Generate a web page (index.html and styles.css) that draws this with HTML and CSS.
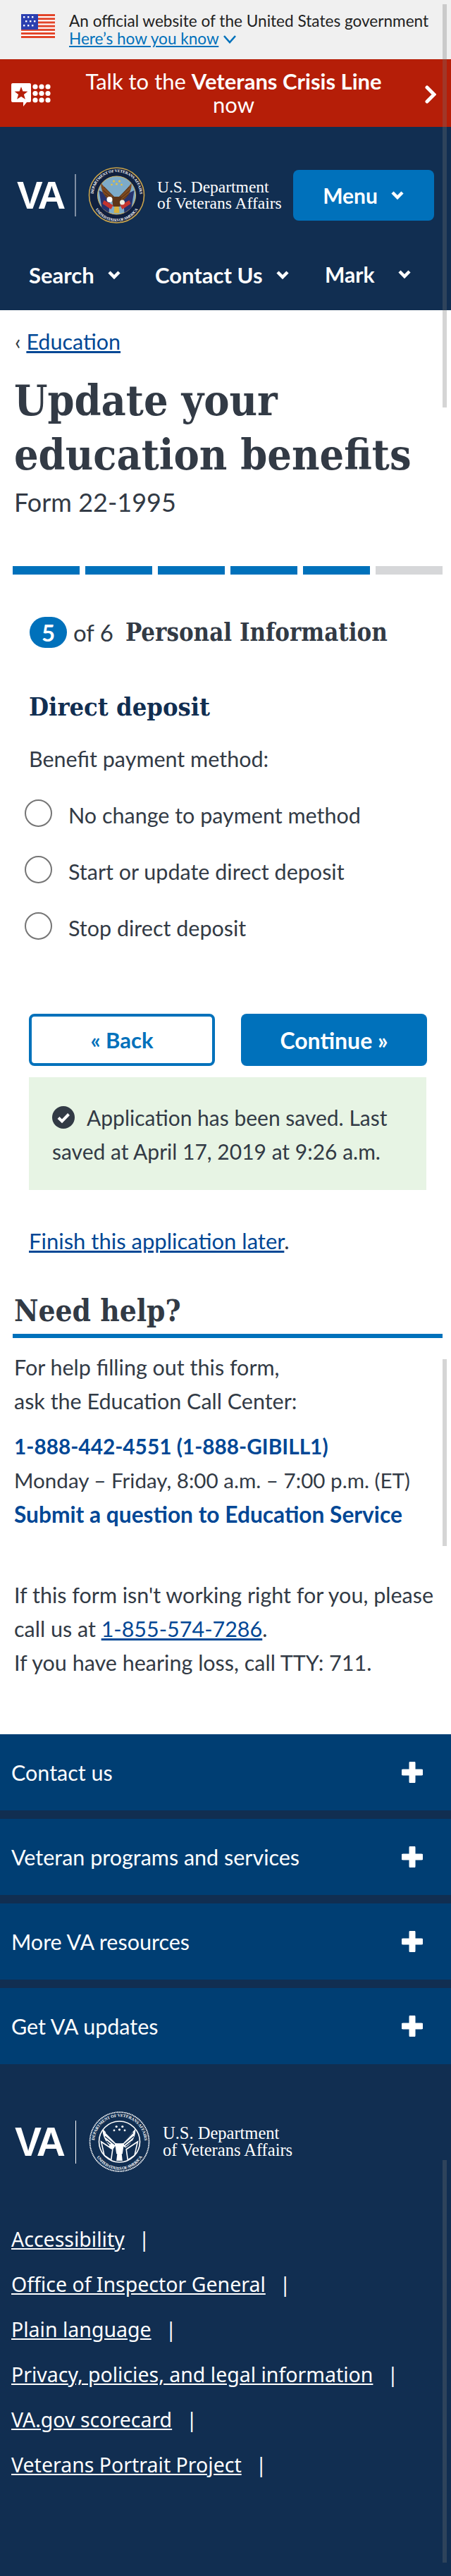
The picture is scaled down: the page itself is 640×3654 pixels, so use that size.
FILE: index.html
```html
<!DOCTYPE html>
<html lang="en">

<head>
    <meta charset="UTF-8">
    <meta name="viewport" content="width=device-width, initial-scale=1.0">
    <title>Update your education benefits</title>
    <link rel="stylesheet" href="styles.css">
</head>

<body>
    <div class="gov-banner">
        <svg class="flag" viewBox="0 0 48 34" aria-hidden="true">
            <rect width="48" height="34" fill="#fff"/>
            <g fill="#e2452a">
                <rect width="48" height="3"/>
                <rect y="5.2" width="48" height="3"/>
                <rect y="10.4" width="48" height="3"/>
                <rect y="15.6" width="48" height="3"/>
                <rect y="20.8" width="48" height="3"/>
                <rect y="26" width="48" height="3"/>
                <rect y="31" width="48" height="3"/>
            </g>
            <rect width="24" height="22" fill="#2b3fb0"/>
            <g fill="#fff">
                <rect x="3" y="3" width="2.4" height="2.4"/><rect x="9" y="3" width="2.4" height="2.4"/><rect x="15" y="3" width="2.4" height="2.4"/>
                <rect x="6" y="9" width="2.4" height="2.4"/><rect x="12" y="9" width="2.4" height="2.4"/><rect x="18" y="9" width="2.4" height="2.4"/>
                <rect x="3" y="15" width="2.4" height="2.4"/><rect x="9" y="15" width="2.4" height="2.4"/><rect x="15" y="15" width="2.4" height="2.4"/>
            </g>
        </svg>
        <div class="gov-text">
            <div class="gov-official">An official website of the United States government</div>
            <a class="gov-link" href="#">Here’s how you know</a>
            <svg class="gov-chevron" viewBox="0 0 20 14" aria-hidden="true"><path d="M2 2l8 9 8-9" fill="none" stroke="#0071bb" stroke-width="2.6"/></svg>
        </div>
    </div>

    <div class="crisis-bar">
        <svg class="crisis-icon" viewBox="0 0 56 33" aria-hidden="true">
            <path d="M2 0h24a2 2 0 0 1 2 2v23a2 2 0 0 1-2 2h-4l-5 6v-6H2a2 2 0 0 1-2-2V2a2 2 0 0 1 2-2z" fill="#fff"/>
            <path d="M14 5l2.4 6.6 7 .2-5.500 4.300 2 6.700-5.900-3.900-5.900 3.900 2-6.700-5.500-4.300 7-.2z" fill="#b51e08"/>
            <g fill="#fff">
                <circle cx="34" cy="5" r="3.6"/><circle cx="43" cy="5" r="3.6"/><circle cx="52" cy="5" r="3.6"/>
                <circle cx="34" cy="14.500" r="3.6"/><circle cx="43" cy="14.500" r="3.6"/><circle cx="52" cy="14.500" r="3.6"/>
                <circle cx="34" cy="24" r="3.6"/><circle cx="43" cy="24" r="3.6"/><circle cx="52" cy="24" r="3.6"/>
            </g>
        </svg>
        <div class="crisis-text">Talk to the <strong>Veterans Crisis Line</strong><br>now</div>
        <svg class="crisis-arrow" viewBox="0 0 16 26" aria-hidden="true"><path d="M3 3l10 10L3 23" fill="none" stroke="#fff" stroke-width="5" stroke-linecap="round"/></svg>
    </div>

    <header class="site-header">
        <div class="header-top">
            <span class="va-mark">VA</span>
            <span class="logo-rule"></span>
            <svg class="seal" viewBox="0 0 80 80" aria-hidden="true">
                <defs>
                    <path id="sealTop" d="M7 40a33 33 0 0 1 66 0"/>
                    <path id="sealBottom" d="M5 42a35 35 0 0 0 70 0"/>
                </defs>
                <circle cx="40" cy="40" r="39" fill="#10203f" stroke="#c9a44c" stroke-width="1.600"/>
                <text class="seal-text"><textPath href="#sealTop" textLength="100" startOffset="2">DEPARTMENT OF VETERANS AFFAIRS</textPath></text>
                <text class="seal-text"><textPath href="#sealBottom" textLength="72" startOffset="19">UNITED STATES OF AMERICA</textPath></text>
                <circle cx="40" cy="40" r="27" fill="#7dabc9" stroke="#d9bb62"/>
                <g fill="#e8c33f"><circle cx="36" cy="20" r="1.500"/><circle cx="44" cy="20" r="1.500"/><circle cx="40" cy="24" r="1.500"/><circle cx="33" cy="25" r="1.300"/><circle cx="47" cy="25" r="1.300"/></g>
                <path d="M15 33l16 8-2 24-10-7z" fill="#26336e"/>
                <path d="M65 33l-16 8 2 24 10-7z" fill="#26336e"/>
                <path d="M20 52l12 8 3-6-13-7zM60 52l-12 8-3-6 13-7z" fill="#c4352f"/>
                <path d="M38 44C32 38 24 30 18 23c-1 8 3 18 13 25z" fill="#7d4a22"/>
                <path d="M42 44c6-6 13-14 19-21 1 8-3 18-13 25z" fill="#7d4a22"/>
                <path d="M36 42L22 28M34 44L21 33M32 46L23 39M44 42l14-14M46 44l13-11M48 46l9-7" fill="none" stroke="#4f2c12"/>
                <path d="M33 42h14l-2 14h-10z" fill="#5e3618"/>
                <circle cx="30" cy="46" r="4" fill="#fff"/>
                <circle cx="48" cy="50" r="3.500" fill="#f0ede0"/>
                <path d="M37 56h6l1 9h-8z" fill="#d9b13b"/>
            </svg>
            <div class="dept-name">U.S. Department<br>of Veterans Affairs</div>
            <button class="menu-button">Menu
                <svg class="chevron" viewBox="0 0 20 14" aria-hidden="true"><path d="M3 3l7 7 7-7" fill="none" stroke="#fff" stroke-width="4.500"/></svg>
            </button>
        </div>
        <nav class="header-nav">
            <span class="nav-item">Search <svg class="chevron" viewBox="0 0 20 14" aria-hidden="true"><path d="M3 3l7 7 7-7" fill="none" stroke="#fff" stroke-width="4.500"/></svg></span>
            <span class="nav-item">Contact Us <svg class="chevron" viewBox="0 0 20 14" aria-hidden="true"><path d="M3 3l7 7 7-7" fill="none" stroke="#fff" stroke-width="4.500"/></svg></span>
            <span class="nav-item nav-mark">Mark <svg class="chevron" viewBox="0 0 20 14" aria-hidden="true"><path d="M3 3l7 7 7-7" fill="none" stroke="#fff" stroke-width="4.500"/></svg></span>
        </nav>
    </header>

    <main class="page">
        <div class="crumb">‹ <a href="#">Education</a></div>
        <h1>Update your<br>education benefits</h1>
        <div class="form-number">Form 22-1995</div>

        <div class="progress">
            <span class="done"></span><span class="done"></span><span class="done"></span><span class="done"></span><span class="done"></span><span></span>
        </div>

        <div class="step">
            <span class="step-badge">5</span>
            <span class="step-of">of 6</span>
            <span class="step-title">Personal Information</span>
        </div>

        <form class="form-body">
            <h3>Direct deposit</h3>
            <p class="field-label">Benefit payment method:</p>
            <div class="radio-row"><span class="radio"></span><span>No change to payment method</span></div>
            <div class="radio-row"><span class="radio"></span><span>Start or update direct deposit</span></div>
            <div class="radio-row"><span class="radio"></span><span>Stop direct deposit</span></div>

            <div class="form-buttons">
                <button type="button" class="btn btn-back">« Back</button>
                <button type="button" class="btn btn-continue">Continue »</button>
            </div>

            <div class="saved-alert">
                <svg class="check-icon" viewBox="0 0 32 32" aria-hidden="true">
                    <circle cx="16" cy="16" r="16" fill="#323a45"/>
                    <path d="M9 16.500l5 5 9.500-10" fill="none" stroke="#fff" stroke-width="4"/>
                </svg>Application has been saved. Last<br>saved at April 17, 2019 at 9:26 a.m.
            </div>

            <p class="finish-later"><a href="#">Finish this application later</a>.</p>
        </form>

        <section class="need-help">
            <h2>Need help?</h2>
            <p>For help filling out this form,<br>ask the Education Call Center:</p>
            <p class="help-contact"><a class="phone-link" href="#">1-888-442-4551 (1-888-GIBILL1)</a><br>Monday – Friday, 8:00 a.m. – 7:00 p.m. (ET)<br><a class="question-link" href="#">Submit a question to Education Service</a></p>
            <p class="help-last">If this form isn't working right for you, please<br>call us at <a href="#">1-855-574-7286</a>.<br>If you have hearing loss, call TTY: 711.</p>
        </section>
    </main>

    <footer class="site-footer">
        <div class="footer-row"><span>Contact us</span><svg class="plus" viewBox="0 0 30 30" aria-hidden="true"><path d="M15 2v26M2 15h26" stroke="#fff" stroke-width="9" stroke-linecap="round" fill="none"/></svg></div>
        <div class="footer-row"><span>Veteran programs and services</span><svg class="plus" viewBox="0 0 30 30" aria-hidden="true"><path d="M15 2v26M2 15h26" stroke="#fff" stroke-width="9" stroke-linecap="round" fill="none"/></svg></div>
        <div class="footer-row"><span>More VA resources</span><svg class="plus" viewBox="0 0 30 30" aria-hidden="true"><path d="M15 2v26M2 15h26" stroke="#fff" stroke-width="9" stroke-linecap="round" fill="none"/></svg></div>
        <div class="footer-row"><span>Get VA updates</span><svg class="plus" viewBox="0 0 30 30" aria-hidden="true"><path d="M15 2v26M2 15h26" stroke="#fff" stroke-width="9" stroke-linecap="round" fill="none"/></svg></div>

        <div class="footer-logo">
            <span class="va-mark footer-va">VA</span>
            <span class="logo-rule footer-rule"></span>
            <svg class="seal footer-seal" viewBox="0 0 80 80" aria-hidden="true">
                <defs>
                    <path id="footTop" d="M7 40a33 33 0 0 1 66 0"/>
                    <path id="footBottom" d="M5 42a35 35 0 0 0 70 0"/>
                </defs>
                <circle cx="40" cy="40" r="39" fill="none" stroke="#fff" stroke-width="1.600" stroke-dasharray="1.500 .7"/>
                <text class="seal-text"><textPath href="#footTop" textLength="100" startOffset="2">DEPARTMENT OF VETERANS AFFAIRS</textPath></text>
                <text class="seal-text"><textPath href="#footBottom" textLength="72" startOffset="19">UNITED STATES OF AMERICA</textPath></text>
                <circle cx="40" cy="40" r="27" fill="none" stroke="#fff" stroke-width="1.500"/>
                <g fill="#fff"><circle cx="36" cy="20" r="1.500"/><circle cx="44" cy="20" r="1.500"/><circle cx="40" cy="24" r="1.500"/><circle cx="33" cy="25" r="1.300"/><circle cx="47" cy="25" r="1.300"/></g>
                <path d="M38 44C32 38 24 30 18 23c-1 8 3 18 13 25z" fill="#fff"/>
                <path d="M42 44c6-6 13-14 19-21 1 8-3 18-13 25z" fill="#fff"/>
                <path d="M36 42L22 28M34 44L21 33M32 46L23 39M44 42l14-14M46 44l13-11M48 46l9-7" fill="none" stroke="#112e51" stroke-width="1.300"/>
                <path d="M16 40l15 10-2 14-9-6zM64 40l-15 10 2 14 9-6z" fill="none" stroke="#fff" stroke-width="1.500"/>
                <path d="M34 42h12l-2 14h-8zM37 56h6l1 9h-8z" fill="#fff"/>
                <circle cx="30" cy="46" r="3.500" fill="#fff"/>
            </svg>
            <div class="dept-name footer-dept">U.S. Department<br>of Veterans Affairs</div>
        </div>

        <ul class="footer-links">
            <li><a href="#">Accessibility</a></li>
            <li><a href="#">Office of Inspector General</a></li>
            <li><a href="#">Plain language</a></li>
            <li><a href="#">Privacy, policies, and legal information</a></li>
            <li><a href="#">VA.gov scorecard</a></li>
            <li><a href="#">Veterans Portrait Project</a></li>
        </ul>
    </footer>

    <div class="scroll-strip strip-top"></div>
    <div class="scroll-strip strip-middle"></div>
    <div class="scroll-strip strip-bottom"></div>
</body>

</html>
```
FILE: styles.css
```css
body {
    font-family: Lato, "Noto Sans", sans-serif;
    font-size: 30.5px;
    line-height: 40px;
    margin: 0;
    color: #323a45;
    background: #112e51;
    position: relative;
    height: 3654px;
    overflow: hidden;
}

p {
    margin: 0;
}

a {
    color: #004795;
}

.gov-banner {
    height: 84px;
    background: #f0f0f0;
    display: flex;
    padding-left: 30px;
    box-sizing: border-box;
}

.flag {
    width: 48px;
    height: 34px;
    margin-top: 20px;
    margin-right: 20px;
}

.gov-text {
    padding-top: 17px;
    font-size: 22.6px;
    line-height: 25px;
    color: #212121;
    white-space: nowrap;
}

.gov-link {
    color: #0071bb;
}

.gov-chevron {
    width: 20px;
    height: 14px;
}

.crisis-bar {
    height: 96px;
    background: #b51e08;
    color: #fff;
    display: flex;
    align-items: center;
    padding: 0 21px 0 16px;
}

.crisis-icon {
    width: 56px;
    height: 33px;
    margin-top: 4px;
}

.crisis-text {
    flex: 1;
    text-align: center;
    font-size: 31px;
    line-height: 33px;
    padding-right: 12px;
}

.crisis-arrow {
    width: 16px;
    height: 26px;
    margin-top: 4px;
}

.site-header {
    height: 260px;
    background: #112e51;
    color: #fff;
    box-sizing: border-box;
    padding-top: 57px;
}

.header-top {
    display: flex;
    align-items: center;
    height: 80px;
    padding-left: 24px;
}

.va-mark {
    font-family: "Liberation Sans", sans-serif;
    font-weight: bold;
    font-size: 55px;
    letter-spacing: -3px;
    line-height: 60px;
    width: 82px;
}

.logo-rule {
    width: 2px;
    height: 60px;
    background: #7f8ea3;
}

.seal {
    width: 81px;
    height: 80px;
    margin-left: 17px;
}

.seal-text {
    font-family: "Liberation Serif", serif;
    font-size: 5.500px;
    font-weight: bold;
    fill: #fff;
}

.dept-name {
    font-family: "Liberation Serif", serif;
    font-size: 23.5px;
    line-height: 23px;
    margin-left: 17px;
    white-space: nowrap;
}

.menu-button {
    margin-left: auto;
    margin-right: 24px;
    width: 200px;
    height: 72px;
    border: none;
    border-radius: 8px;
    background: #0071bb;
    color: #fff;
    font-family: Lato, sans-serif;
    font-size: 30px;
    font-weight: bold;
    display: flex;
    align-items: center;
    justify-content: center;
    gap: 18px;
}

.chevron {
    width: 20px;
    height: 14px;
}

.header-nav {
    display: grid;
    grid-template-columns: 179px 241px auto;
    padding-left: 41px;
    margin-top: 53px;
    font-size: 31px;
    font-weight: bold;
}

.nav-item {
    display: flex;
    align-items: center;
    gap: 18px;
}

.nav-mark {
    gap: 33px;
    margin-top: -3px;
    font-size: 30px;
}

.page {
    height: 2020px;
    background: #fff;
    overflow: hidden;
}

.crumb {
    padding: 24px 0 0 21px;
}

h1 {
    font-family: "DejaVu Serif Condensed", "DejaVu Serif", serif;
    font-size: 60.5px;
    line-height: 77px;
    font-weight: bold;
    margin: 25px 0 0 20px;
}

.form-number {
    font-size: 36px;
    line-height: 48px;
    margin: 5px 0 0 20px;
}

.progress {
    display: flex;
    gap: 8px;
    margin: 67px 0 0 18px;
}

.progress span {
    width: 95px;
    height: 12px;
    background: #d6d7d9;
}

.progress .done {
    background: #0071bb;
}

.step {
    display: flex;
    align-items: center;
    height: 44px;
    margin: 60px 0 0 42px;
    font-size: 33px;
}

.step-badge {
    width: 53px;
    height: 44px;
    border-radius: 22px;
    background: #0071bb;
    color: #fff;
    font-weight: bold;
    text-align: center;
    line-height: 44px;
    margin-right: 9px;
}

.step-of {
    margin-right: 17px;
}

.step-title {
    font-family: "DejaVu Serif Condensed", "DejaVu Serif", serif;
    font-weight: bold;
    font-size: 34.5px;
}

.form-body {
    padding: 0 35px 0 41px;
}

h3 {
    font-family: "DejaVu Serif Condensed", "DejaVu Serif", serif;
    font-size: 36px;
    line-height: 48px;
    font-weight: bold;
    color: #112e51;
    margin: 59px 0 0 0;
}

.field-label {
    margin-top: 30px;
}

.radio-row {
    display: flex;
    gap: 23px;
    height: 40px;
    margin: 38px 0 0 -6px;
}

.radio-row + .radio-row {
    margin-top: 40px;
}

.radio-row > span:last-child {
    padding-top: 2px;
}

.radio {
    width: 39px;
    height: 39px;
    box-sizing: border-box;
    border: 2px solid #757575;
    border-radius: 50%;
}

.form-buttons {
    display: grid;
    grid-template-columns: 264px 264px;
    gap: 37px;
    margin-top: 104px;
}

.btn {
    height: 74px;
    border-radius: 8px;
    font-family: Lato, sans-serif;
    font-size: 31px;
    font-weight: bold;
    box-sizing: border-box;
}

.btn-back {
    background: #fff;
    color: #0071bb;
    border: 4px solid #0071bb;
}

.btn-continue {
    background: #0071bb;
    color: #fff;
    border: none;
    font-size: 32px;
}

.saved-alert {
    margin-top: 16px;
    height: 160px;
    box-sizing: border-box;
    background: #e7f4e4;
    padding: 33px 0 0 33px;
    font-size: 30px;
    line-height: 48px;
    white-space: nowrap;
}

.check-icon {
    width: 32px;
    height: 32px;
    margin-right: 17px;
    vertical-align: -4px;
}

.finish-later {
    margin-top: 52px;
    font-size: 31px;
}

.need-help {
    margin: 52px 12px 0 18px;
}

h2 {
    font-family: "DejaVu Serif Condensed", "DejaVu Serif", serif;
    font-size: 42px;
    line-height: 56px;
    font-weight: bold;
    margin: 0;
    padding: 0 0 4px 2px;
    border-bottom: 6px solid #0071bb;
}

.need-help p {
    line-height: 48px;
    margin: 17px 0 0 2px;
    white-space: nowrap;
}

.need-help .help-contact {
    font-size: 29.6px;
}

.need-help .help-last {
    margin-top: 65px;
}

.phone-link {
    font-size: 29.8px;
    font-weight: bold;
    text-decoration: none;
}

.question-link {
    font-size: 31.7px;
    font-weight: bold;
    text-decoration: none;
}

.site-footer {
    color: #fff;
}

.footer-row {
    height: 108px;
    margin-bottom: 12px;
    background: #003e73;
    display: flex;
    align-items: center;
    justify-content: space-between;
    padding: 0 40px 0 16px;
}

.plus {
    width: 30px;
    height: 30px;
}

.footer-logo {
    display: flex;
    align-items: center;
    height: 86px;
    margin-top: 67px;
    padding-left: 21px;
}

.footer-va {
    width: 86px;
    font-size: 57px;
}

.footer-rule {
    height: 61px;
    width: 1px;
    background: #fff;
}

.footer-seal {
    width: 87px;
    height: 86px;
    margin-left: 18px;
}

.footer-dept {
    font-size: 24.5px;
    line-height: 24px;
    margin-left: 18px;
}

.footer-links {
    list-style: none;
    margin: 63px 0 0 16px;
    padding: 0;
    font-family: "Noto Sans", sans-serif;
    font-size: 28.5px;
    line-height: 64px;
}

.footer-links a {
    color: #fff;
}

.footer-links li::after {
    content: "|";
    margin-left: 20px;
}

.scroll-strip {
    position: absolute;
    left: 628px;
    width: 6px;
    background: rgba(115, 115, 115, 0.3);
}

.strip-top {
    top: 6px;
    height: 572px;
}

.strip-middle {
    top: 1928px;
    height: 265px;
}

.strip-bottom {
    top: 3064px;
    height: 571px;
}
```
